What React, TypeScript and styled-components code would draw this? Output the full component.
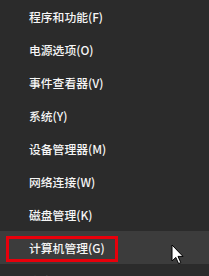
import React from "react";
import styled, { createGlobalStyle } from "styled-components";

const Global = createGlobalStyle`
  html, body {
    margin: 0;
    padding: 0;
    background: #2b2b2b;
    overflow: hidden;
  }
  #root {
    width: 209px;
    height: 276px;
  }
`;

const Menu = styled.div`
  position: relative;
  width: 209px;
  height: 276px;
  background: #2b2b2b;
  display: flex;
  flex-direction: column;
  overflow: hidden;
  font-family: "Noto Sans CJK SC", "Microsoft YaHei", sans-serif;
`;

const Item = styled.div<{ $active?: boolean }>`
  position: relative;
  flex: 0 0 33px;
  height: 33px;
  display: flex;
  align-items: center;
  padding-left: 29px;
  box-sizing: border-box;
  background: ${(p) => (p.$active ? "#3c3c3c" : "transparent")};
  color: #f6f6f6;
  font-size: 11.8px;
  font-weight: 500;
  line-height: 1;
  white-space: nowrap;
`;

const Label = styled.span`
  display: inline-block;
`;

const RedBox = styled.div`
  position: absolute;
  left: 6px;
  top: 5px;
  width: 112px;
  height: 26px;
  box-sizing: border-box;
  border: 3px solid #e8000b;
  pointer-events: none;
`;

const Cursor = styled.svg`
  position: absolute;
  left: 171px;
  top: 244px;
  width: 13px;
  height: 21px;
  overflow: visible;
`;

const items = [
  "程序和功能(F)",
  "电源选项(O)",
  "事件查看器(V)",
  "系统(Y)",
  "设备管理器(M)",
  "网络连接(W)",
  "磁盘管理(K)",
  "计算机管理(G)",
  "命令提示符(C)",
];

export default function App() {
  return (
    <>
      <Global />
      <Menu>
        {items.map((t, i) => (
          <Item key={t} $active={i === 7}>
            <Label>{t}</Label>
            {i === 7 && <RedBox />}
          </Item>
        ))}
        <Cursor viewBox="0 0 13 21">
          <path
            d="M1 1 L1 17 L4.8 13.4 L7.6 19.6 L9.8 18.6 L7 12.4 L12 12.4 Z"
            fill="#ffffff"
            stroke="#000000"
            strokeWidth="1"
            strokeLinejoin="miter"
          />
        </Cursor>
      </Menu>
    </>
  );
}
